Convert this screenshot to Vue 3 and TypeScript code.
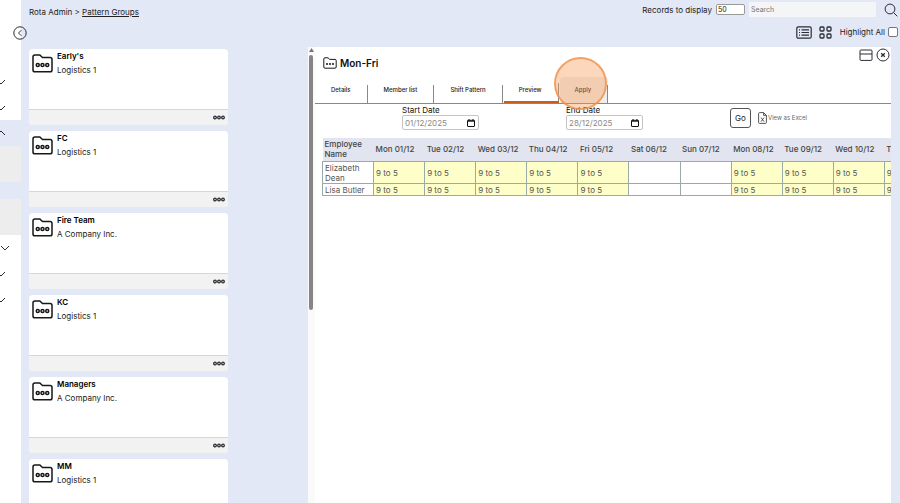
<script setup lang="ts">
import { ref } from 'vue'

interface Group {
  name: string
  company: string
}

const groups: Group[] = [
  { name: "Early's", company: 'Logistics 1' },
  { name: 'FC', company: 'Logistics 1' },
  { name: 'Fire Team', company: 'A Company Inc.' },
  { name: 'KC', company: 'Logistics 1' },
  { name: 'Managers', company: 'A Company Inc.' },
  { name: 'MM', company: 'Logistics 1' },
]

const tabs = ['Details', 'Member list', 'Shift Pattern', 'Preview', 'Apply']
const activeTab = ref('Preview')

const days = [
  'Mon 01/12', 'Tue 02/12', 'Wed 03/12', 'Thu 04/12', 'Fri 05/12', 'Sat 06/12',
  'Sun 07/12', 'Mon 08/12', 'Tue 09/12', 'Wed 10/12', 'Thu 11/12',
]
const employees = ['Elizabeth Dean', 'Lisa Butler']

const isWorking = (day: string) => !day.startsWith('Sat') && !day.startsWith('Sun')

const records = ref('50')
const search = ref('')
const highlightAll = ref(false)
const startDate = ref('01/12/2025')
const endDate = ref('28/12/2025')
</script>

<template>
  <div class="page">
    <nav class="sidebar">
      <div class="side-block top">
        <svg class="chev" viewBox="0 0 10 6"><path d="M1 1l4 4 4-4" /></svg>
        <svg class="chev" viewBox="0 0 10 6"><path d="M1 1l4 4 4-4" /></svg>
      </div>
      <div class="side-block open">
        <svg class="chev" viewBox="0 0 10 6"><path d="M1 5l4-4 4 4" /></svg>
      </div>
      <div class="side-item"></div>
      <div class="side-gap"></div>
      <div class="side-item"></div>
      <div class="side-block rest">
        <svg class="chev wide" viewBox="0 0 10 6"><path d="M1 1l4 4 4-4" /></svg>
        <svg class="chev" viewBox="0 0 10 6"><path d="M1 1l4 4 4-4" /></svg>
        <svg class="chev" viewBox="0 0 10 6"><path d="M1 1l4 4 4-4" /></svg>
      </div>
      <button class="collapse" aria-label="Collapse menu">
        <svg viewBox="0 0 14 14"><circle cx="7" cy="7" r="6.2" /><path d="M8.3 4.2L5.5 7l2.8 2.8" /></svg>
      </button>
    </nav>

    <main class="main">
      <header class="bar">
        <div class="crumbs">Rota Admin &gt; <a href="#">Pattern Groups</a></div>
        <div class="filters">
          <label for="records">Records to display</label>
          <input id="records" v-model="records" class="records" type="text" />
          <input v-model="search" class="search" type="text" placeholder="Search" aria-label="Search" />
          <button class="icon-btn find" aria-label="Run search">
            <svg viewBox="0 0 14 14"><circle cx="6" cy="6" r="4.9" /><path d="M9.6 9.6l3.7 3.7" /></svg>
          </button>
        </div>
      </header>

      <div class="views">
        <button class="icon-btn list-view" aria-label="List view">
          <svg viewBox="0 0 16 13">
            <rect x=".8" y=".8" width="14.4" height="11.4" rx="1.5" />
            <path d="M5.5 3.8h7.5M5.5 6.5h7.5M5.5 9.2h7.5M3 3.8h1M3 6.5h1M3 9.2h1" />
          </svg>
        </button>
        <button class="icon-btn grid-view" aria-label="Grid view">
          <svg viewBox="0 0 13 13">
            <rect x="1" y="1" width="4" height="4" rx="1" /><rect x="8" y="1" width="4" height="4" rx="1" />
            <rect x="1" y="8" width="4" height="4" rx="1" /><rect x="8" y="8" width="4" height="4" rx="1" />
          </svg>
        </button>
        <label for="highlight">Highlight All</label>
        <input id="highlight" v-model="highlightAll" type="checkbox" />
      </div>

      <div class="columns">
        <section class="cards">
          <article v-for="g in groups" :key="g.name" class="card">
            <div class="card-body">
              <svg class="folder" viewBox="0 0 22 20">
                <path d="M1 16.8V3Q1 1 3 1H8.2L11 3.7H19Q21 3.7 21 5.7V16.8Q21 18.8 19 18.8H3Q1 18.8 1 16.8Z" />
                <circle cx="6" cy="11.6" r="1.6" /><circle cx="11" cy="11.6" r="1.6" /><circle cx="16" cy="11.6" r="1.6" />
              </svg>
              <div class="card-text">
                <h2>{{ g.name }}</h2>
                <p>{{ g.company }}</p>
              </div>
            </div>
            <footer class="card-foot">
              <button class="icon-btn more" aria-label="More options">
                <svg viewBox="0 0 12 5"><circle cx="2" cy="2.5" r="1.3" /><circle cx="6" cy="2.5" r="1.3" /><circle cx="10" cy="2.5" r="1.3" /></svg>
              </button>
            </footer>
          </article>
        </section>

        <section class="panel">
          <div class="scroll">
            <svg viewBox="0 0 7 6"><path d="M3.5 1L6 5H1z" /></svg>
            <div class="thumb"></div>
          </div>
          <div class="detail">
            <div class="title-row">
              <svg class="folder small" viewBox="0 0 14 12">
                <path d="M.8 10V2Q.8.8 2 .8H5L6.8 2.4H12Q13.2 2.4 13.2 3.6V10Q13.2 11.2 12 11.2H2Q.8 11.2.8 10Z" />
                <circle cx="4" cy="7" r=".7" /><circle cx="7" cy="7" r=".7" /><circle cx="10" cy="7" r=".7" />
              </svg>
              <h1>Mon-Fri</h1>
              <div class="window-btns">
                <button class="icon-btn" aria-label="Split view">
                  <svg viewBox="0 0 14 14"><rect x="1" y="2" width="12" height="10.4" rx="1" /><path d="M1 6h12" /></svg>
                </button>
                <button class="icon-btn" aria-label="Close">
                  <svg viewBox="0 0 14 14"><circle cx="7" cy="7" r="6" /><path class="cross" d="M5.2 5.2l3.6 3.6M8.8 5.2L5.2 8.8" /></svg>
                </button>
              </div>
            </div>

            <div class="tabs" role="tablist">
              <button
                v-for="t in tabs"
                :key="t"
                class="tab"
                role="tab"
                :aria-selected="t === activeTab"
                :class="{ active: t === activeTab, hovered: t === 'Apply' }"
                @click="activeTab = t"
              >
                {{ t }}
                <span v-if="t === 'Apply'" class="pointer"></span>
              </button>
            </div>

            <form class="range" @submit.prevent>
              <div class="field">
                <label for="start">Start Date</label>
                <div class="date">
                  <input id="start" v-model="startDate" type="text" />
                  <svg viewBox="0 0 8 8"><rect x=".5" y="1.3" width="7" height="6.2" rx=".5" /><path d="M.5 2.2h7M2 0v2M6 0v2" /></svg>
                </div>
              </div>
              <div class="field">
                <label for="end">End Date</label>
                <div class="date">
                  <input id="end" v-model="endDate" type="text" />
                  <svg viewBox="0 0 8 8"><rect x=".5" y="1.3" width="7" height="6.2" rx=".5" /><path d="M.5 2.2h7M2 0v2M6 0v2" /></svg>
                </div>
              </div>
              <div class="actions">
                <button class="go" type="submit">Go</button>
                <a class="excel" href="#">
                  <svg viewBox="0 0 9 12"><path d="M1.6.6h4L8.4 3.4v7q0 1-1 1H1.6q-1 0-1-1V1.6q0-1 1-1zM5.6.6v2.8h2.8M3 5.6l3 4M6 5.6l-3 4" /></svg>
                  View as Excel
                </a>
              </div>
            </form>

            <div class="table-wrap">
              <table>
                <thead>
                  <tr>
                    <th class="name">Employee Name</th>
                    <th v-for="d in days" :key="d">{{ d }}</th>
                  </tr>
                </thead>
                <tbody>
                  <tr v-for="e in employees" :key="e">
                    <td class="name">{{ e }}</td>
                    <td v-for="d in days" :key="d" :class="{ work: isWorking(d) }">{{ isWorking(d) ? '9 to 5' : '' }}</td>
                  </tr>
                </tbody>
              </table>
            </div>
          </div>
        </section>
      </div>
    </main>
  </div>
</template>

<style>
body {
  background: #e2e8f6;
}
</style>

<style scoped>
* {
  box-sizing: border-box;
}
.page {
  display: flex;
  height: 100vh;
  overflow: hidden;
  background: #e2e8f6;
  color: #222;
  font-family: Inter, "Liberation Sans", sans-serif;
  font-size: 8px;
  line-height: 12px;
}
svg {
  display: block;
  fill: none;
  stroke: #2b2d33;
  stroke-width: 1;
}
button,
input {
  font: inherit;
  color: inherit;
  margin: 0;
}
.icon-btn {
  padding: 0;
  border: 0;
  background: none;
}
a {
  color: inherit;
}

/* sidebar */
.sidebar {
  position: relative;
  display: flex;
  flex-direction: column;
  flex: none;
  width: 21px;
}
.side-block {
  display: flex;
  flex-direction: column;
  gap: 20px;
  background: #fff;
}
.side-block.top {
  height: 120px;
  padding-top: 79px;
}
.side-block.open {
  height: 26px;
  padding-top: 10px;
  background: none;
}
.side-block.rest {
  flex: 1;
  padding-top: 10px;
}
.side-item {
  height: 36px;
  background: #ededee;
}
.side-gap {
  height: 17px;
}
.chev {
  width: 10px;
  height: 6px;
  margin-left: -4px;
}
.chev.wide {
  margin-left: 0;
}
.collapse {
  position: absolute;
  top: 26px;
  right: -6px;
  padding: 0;
  border: 0;
  border-radius: 50%;
  background: none;
}
.collapse svg {
  width: 14px;
  height: 14px;
}

/* header */
.main {
  display: flex;
  flex: 1;
  flex-direction: column;
  min-width: 0;
  padding-left: 8px;
}
.bar {
  display: flex;
  justify-content: space-between;
  height: 22px;
  padding-right: 2px;
}
.crumbs {
  padding-top: 6px;
}
.filters {
  display: flex;
  align-items: center;
  gap: 4px;
  height: 19px;
}
.records {
  width: 29px;
  height: 11px;
  padding: 0 1px;
  border: 1px solid #999;
  border-radius: 2px;
  background: #fff;
  font-size: 7px;
}
.search {
  width: 127px;
  height: 15px;
  padding: 0 2px;
  border: 0;
  background: #f4f5f7;
  font-size: 7px;
}
.search::placeholder {
  color: #777;
}
.find {
  margin-left: 4px;
}
.find svg {
  width: 14px;
  height: 14px;
}
.views {
  display: flex;
  align-items: center;
  justify-content: flex-end;
  height: 20px;
  padding-right: 2px;
}
.list-view {
  margin-right: 7px;
}
.list-view svg {
  width: 16px;
  height: 13px;
  stroke-width: 1.2;
}
.grid-view {
  margin-right: 8px;
}
.grid-view svg {
  width: 13px;
  height: 13px;
  stroke-width: 1.3;
}
.views input {
  width: 10px;
  height: 10px;
  margin-left: 3px;
  border: 1px solid #777;
  border-radius: 2px;
  background: #fff;
  appearance: none;
}
.views input:checked {
  background: #36c;
}

/* cards */
.columns {
  display: flex;
  flex: 1;
  gap: 80px;
  min-height: 0;
  padding: 5px 9px 0 0;
}
.cards {
  display: flex;
  flex: none;
  flex-direction: column;
  gap: 6px;
  width: 199px;
  padding-top: 2px;
}
.card {
  flex: none;
  overflow: hidden;
  border-radius: 4px;
  background: #fff;
}
.card-body {
  display: flex;
  gap: 4px;
  height: 60px;
  padding: 1px 3px;
}
.folder {
  width: 21px;
  height: 19px;
  margin-top: 4px;
  stroke: #17181b;
  stroke-width: 1.6;
}
.card-text h2,
.card-text p {
  margin: 0;
  font-size: 8px;
  line-height: 12px;
}
.card-text h2 {
  margin-bottom: 2px;
  color: #000;
  font-weight: 600;
}
.card-foot {
  display: flex;
  align-items: center;
  justify-content: flex-end;
  height: 16px;
  padding-right: 3px;
  border-top: 1px solid #d5d7d9;
  background: #f2f2f2;
}
.more svg {
  width: 12px;
  height: 5px;
  stroke-width: 1.3;
}

/* detail panel */
.panel {
  display: flex;
  flex: 1;
  min-width: 0;
  background: #fff;
}
.scroll {
  flex: none;
  width: 7px;
  background: #fafafa;
}
.scroll svg {
  width: 7px;
  height: 6px;
  fill: #777;
  stroke: none;
}
.thumb {
  width: 4px;
  height: 56%;
  margin: 2px auto 0 1px;
  border-radius: 2px;
  background: #858585;
}
.detail {
  flex: 1;
  min-width: 0;
}
.title-row {
  display: flex;
  align-items: center;
  gap: 3px;
  height: 30px;
  padding: 1px 1px 0 8px;
}
.folder.small {
  width: 14px;
  height: 12px;
  margin: 0;
  stroke-width: 1;
}
.title-row h1 {
  margin: 0;
  color: #111;
  font-size: 10px;
  font-weight: 600;
  line-height: 14px;
}
.window-btns {
  display: flex;
  align-self: flex-start;
  gap: 3px;
  margin-left: auto;
}
.window-btns svg {
  width: 14px;
  height: 14px;
}
.window-btns .cross {
  stroke-width: 1.3;
}
.tabs {
  display: flex;
  gap: 1px;
  height: 27px;
  padding-left: 1px;
  border-bottom: 1px solid #888;
}
.tab {
  position: relative;
  height: 26px;
  padding: 0 17px 0 15px;
  border: 0;
  background: linear-gradient(#888, #888) right bottom / 1px 18px no-repeat;
  font-size: 6px;
  font-weight: 500;
  line-height: 8px;
}
.tab.active {
  padding-top: 2px;
  border-bottom: 2px solid #c8601c;
}
.tab.hovered {
  background-color: #eee;
  border-radius: 4px 4px 0 0;
}
.pointer {
  position: absolute;
  top: -20px;
  left: 50%;
  width: 53px;
  height: 53px;
  margin-left: -30px;
  border: 2px solid rgba(239, 143, 69, 0.75);
  border-radius: 50%;
  background: rgba(247, 154, 84, 0.4);
}
.range {
  display: flex;
  height: 34px;
  padding-left: 87px;
}
.field {
  flex: none;
  width: 164px;
}
.field label {
  display: block;
  height: 11px;
  color: #111;
}
.date {
  display: flex;
  align-items: center;
  width: 77px;
  height: 15px;
  padding: 0 3px 0 2px;
  border: 1px solid #c4c4c4;
  border-radius: 2px;
}
.date input {
  flex: 1;
  min-width: 0;
  padding: 0;
  border: 0;
  background: none;
  color: #8a8a8a;
}
.date svg {
  width: 8px;
  height: 8px;
  stroke: #111;
}
.actions {
  display: flex;
  align-items: flex-start;
  gap: 7px;
  padding-top: 4px;
}
.go {
  width: 21px;
  height: 20px;
  padding: 0;
  border: 1px solid #555;
  border-radius: 3px;
  background: #fff;
}
.excel {
  display: flex;
  align-items: center;
  gap: 1px;
  height: 20px;
  color: #666;
  font-size: 6px;
  text-decoration: none;
  white-space: nowrap;
}
.excel svg {
  width: 9px;
  height: 12px;
  stroke: #444;
  stroke-width: 0.9;
}

/* preview table */
.table-wrap {
  overflow: hidden;
  padding-left: 7px;
}
table {
  width: 614px;
  border-collapse: collapse;
  table-layout: fixed;
  line-height: 10px;
}
th {
  height: 23px;
  padding: 1px 2px;
  background: #e2e5f0;
  color: #444;
  font-weight: 500;
  text-align: left;
  white-space: nowrap;
}
td {
  height: 12px;
  padding: 1px 2px 0;
  border: 1px solid #9aaba6;
  color: #555;
}
th.name {
  padding: 1px 2px;
  white-space: normal;
}
td.name {
  padding: 1px 2px 0;
}
.work {
  background: #fdfec8;
}
</style>
